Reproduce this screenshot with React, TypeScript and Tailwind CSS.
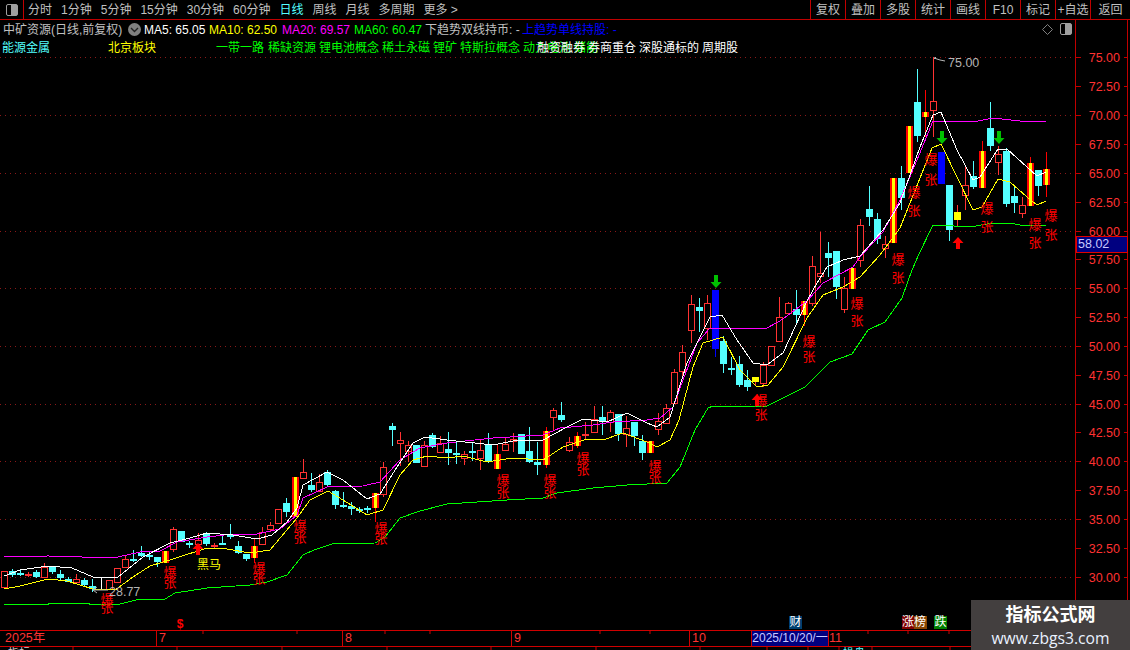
const FONT = "font-['Liberation_Sans','Noto_Sans_CJK_SC',sans-serif]"

const RED = "#ff3232"
const CYAN = "#54ffff"

// [x, type, high, bodyTop, bodyBottom, low] in page pixels
// r hollow red, c cyan, z red/yellow striped, b blue, y yellow, w white stick
type Candle = [number, string, number, number, number, number]
const candles: Candle[] = [
  [4, "r", 571, 571, 587, 587], [12, "c", 569, 571, 575, 577], [20, "c", 570, 573, 574, 576], [28, "f", 572, 574, 576, 577],
  [36, "c", 570, 572, 577, 578], [44, "r", 563, 567, 577, 577], [52, "c", 566, 567, 572, 574], [60, "c", 570, 574, 578, 580],
  [68, "c", 577, 579, 582, 582], [76, "r", 574, 579, 582, 583], [84, "c", 578, 580, 585, 587], [92, "c", 579, 586, 589, 592],
  [101, "w", 578, 578, 590, 590], [109, "r", 580, 580, 589, 589], [117, "r", 568, 568, 582, 582], [125, "r", 555, 559, 567, 567],
  [133, "c", 550, 559, 561, 562], [141, "c", 546, 553, 556, 557], [149, "c", 552, 555, 557, 560], [157, "c", 557, 557, 562, 567],
  [165, "z", 551, 551, 563, 563], [173, "r", 527, 529, 549, 552], [181, "c", 531, 531, 542, 542], [189, "c", 541, 543, 544, 548],
  [198, "r", 533, 540, 544, 546], [206, "c", 532, 533, 544, 546], [214, "f", 543, 545, 547, 548], [222, "c", 534, 543, 544, 545],
  [230, "c", 524, 534, 537, 539], [238, "c", 541, 546, 553, 554], [246, "c", 554, 554, 559, 561], [254, "z", 538, 546, 558, 563],
  [262, "r", 527, 532, 544, 544], [270, "r", 522, 525, 529, 532], [278, "r", 509, 509, 523, 523], [286, "c", 498, 503, 512, 517],
  [295, "z", 477, 477, 517, 517], [303, "r", 459, 472, 478, 479], [311, "c", 473, 485, 490, 492], [319, "r", 474, 482, 491, 491],
  [327, "c", 470, 472, 485, 487], [335, "c", 490, 491, 505, 509], [343, "c", 492, 505, 506, 508], [351, "c", 502, 506, 509, 515],
  [359, "c", 507, 509, 510, 513], [367, "c", 506, 508, 510, 513], [375, "z", 493, 493, 508, 522], [383, "r", 462, 467, 494, 497],
  [392, "c", 423, 426, 430, 446], [400, "r", 432, 440, 443, 466], [408, "r", 441, 445, 451, 462], [416, "c", 445, 445, 463, 463],
  [424, "r", 441, 445, 466, 466], [432, "c", 433, 435, 447, 448], [440, "r", 436, 443, 452, 452], [448, "c", 432, 449, 453, 465],
  [456, "c", 442, 453, 454, 464], [464, "r", 451, 454, 458, 465], [472, "c", 442, 451, 453, 461], [480, "r", 440, 450, 458, 470],
  [488, "c", 433, 445, 462, 463], [497, "z", 445, 454, 469, 469], [505, "r", 437, 444, 450, 450], [513, "r", 433, 439, 441, 452],
  [521, "c", 434, 434, 454, 454], [529, "c", 427, 451, 462, 463], [537, "c", 442, 462, 465, 475], [546, "z", 427, 431, 465, 468],
  [553, "r", 408, 410, 417, 430], [561, "c", 402, 415, 420, 422], [569, "r", 437, 442, 450, 452], [577, "z", 432, 436, 446, 448],
  [585, "f", 422, 434, 436, 440], [594, "r", 406, 419, 432, 433], [602, "c", 406, 417, 421, 435], [610, "r", 410, 412, 422, 432],
  [618, "c", 414, 414, 434, 441], [626, "r", 416, 428, 434, 447], [634, "c", 422, 422, 436, 446], [642, "c", 435, 441, 453, 460],
  [650, "z", 441, 441, 453, 453], [658, "r", 413, 421, 429, 435], [666, "r", 404, 408, 423, 424], [674, "r", 369, 372, 403, 403],
  [682, "r", 345, 352, 371, 377], [691, "r", 295, 304, 330, 343], [699, "c", 298, 307, 311, 332], [707, "r", 295, 303, 328, 340],
  [715, "b", 290, 290, 349, 357], [723, "c", 336, 341, 364, 373], [731, "c", 357, 368, 370, 375], [739, "c", 356, 364, 385, 387],
  [747, "c", 370, 380, 387, 391], [755, "y", 377, 377, 382, 386], [763, "r", 362, 365, 383, 387], [771, "r", 346, 346, 365, 365],
  [779, "r", 297, 317, 341, 342], [788, "r", 302, 303, 313, 315], [796, "c", 290, 309, 315, 325], [804, "z", 301, 301, 315, 326],
  [812, "r", 256, 266, 303, 306], [820, "r", 232, 273, 276, 283], [828, "c", 242, 253, 258, 277], [836, "c", 251, 251, 287, 299],
  [844, "r", 277, 288, 309, 313], [852, "z", 268, 268, 289, 289], [860, "r", 219, 225, 260, 267], [869, "c", 186, 209, 217, 226],
  [877, "c", 213, 219, 239, 244], [885, "r", 236, 244, 248, 258], [893, "z", 178, 178, 243, 243], [901, "c", 166, 178, 198, 210],
  [909, "z", 126, 126, 173, 173], [917, "c", 69, 102, 136, 142], [925, "z", 90, 112, 117, 137], [933, "r", 56, 101, 110, 137],
  [941, "b", 152, 152, 184, 184], [949, "c", 185, 185, 230, 241], [957, "y", 205, 212, 220, 227], [965, "r", 165, 185, 195, 210],
  [973, "c", 161, 176, 187, 189], [982, "z", 141, 151, 188, 188], [990, "c", 102, 128, 146, 151], [998, "r", 146, 154, 162, 175],
  [1006, "c", 148, 151, 204, 207], [1014, "c", 186, 196, 203, 213], [1022, "r", 197, 205, 213, 218], [1030, "z", 157, 163, 206, 206],
  [1038, "c", 170, 170, 186, 196], [1046, "z", 152, 169, 185, 197],
]

const ma60 = "4,604 48,604 48,603 89,603 89,604 120,604 140,599 165,599 175,593 207,588 250,585 267,582 287,575 303,555 314,550 332,544 375,543 385,537 400,518 420,511 447,504 507,500 543,498 557,493 593,488 627,485 667,483 680,467 695,430 708,408 713,406 767,406 805,387 830,362 852,354 868,330 885,322 902,298 912,270 919,254 933,225 938,225 970,227 993,223 1010,223 1020,225 1046,225"
const ma20 = "4,557 48,556 82,557 118,557 140,552 160,551 177,542 207,537 233,534 257,534 280,529 297,515 303,498 327,487 363,486 380,482 400,460 420,448 447,443 493,438 543,435 560,428 593,425 613,422 647,420 660,418 673,407 683,380 697,343 710,328 743,328 765,329 780,321 807,301 823,283 840,274 853,267 860,257 883,232 900,200 917,160 933,121 960,121 973,122 993,118 1020,121 1046,121"
const ma5 = "4,576 20,570 48,566 72,568 93,577 118,577 143,557 170,543 190,538 207,533 233,535 257,539 272,535 287,522 297,508 303,485 327,472 343,480 367,499 380,494 397,467 413,443 425,437 447,440 493,445 513,441 543,440 567,427 583,419 607,422 627,413 647,423 657,427 670,417 687,363 710,317 722,315 737,340 753,363 767,365 783,353 807,301 817,283 827,267 843,260 860,256 883,230 900,203 920,147 933,115 941,112 957,150 973,180 980,177 998,149 1007,149 1027,167 1037,176 1046,172"
const ma10 = "4,589 20,586 48,579 67,581 93,589 115,590 133,577 150,566 173,559 207,548 227,549 250,553 270,550 297,518 310,500 328,491 343,500 367,515 383,510 400,475 413,460 427,456 447,458 463,456 487,462 513,458 543,460 563,447 587,439 603,440 623,433 647,442 657,447 670,440 679,420 693,367 703,343 723,337 740,370 757,387 768,385 783,367 807,318 823,295 843,287 860,277 880,255 900,228 922,173 932,148 941,144 957,177 973,210 982,207 998,179 1010,182 1027,197 1037,205 1046,201"

// [x, 爆 y, 张 y]
const booms = [
  [107, 599, 607], [170, 572, 582], [259, 568, 578], [300, 526, 537], [381, 528, 538], [503, 480, 492], [550, 480, 492],
  [583, 458, 469], [655, 466, 477], [761, 400, 414], [809, 341, 356], [857, 303, 320], [898, 259, 277], [914, 192, 210],
  [931, 159, 179], [987, 208, 226], [1035, 224, 242], [1051, 215, 234],
]

const upArrows = [[198, 543], [757, 394], [958, 237]]
const downArrows = [[716, 275], [942, 131], [999, 131]]

const leftTabs = ["分时", "1分钟", "5分钟", "15分钟", "30分钟", "60分钟", "日线", "周线", "月线", "多周期", "更多 >"]
const rightTabs = ["复权", "叠加", "多股", "统计", "画线", "F10", "标记", "+自选", "返回"]
const prices = [75, 72.5, 70, 67.5, 65, 62.5, 60, 57.5, 55, 52.5, 50, 47.5, 45, 42.5, 40, 37.5, 35, 32.5, 30]
const priceY = (p: number) => Math.round(57.4 + (75 - p) * 11.54)

function CandleMark({ c }: { c: Candle }) {
  const [x, type, high, top, bottom, low] = c
  const h = Math.max(bottom - top, 2)
  if (type === "w") return <line x1={x} x2={x} y1={high} y2={low} stroke="#fff" />
  if (type === "r")
    return (
      <g>
        <line x1={x} x2={x} y1={high} y2={top} stroke={RED} />
        <line x1={x} x2={x} y1={bottom} y2={low} stroke={RED} />
        <rect x={x - 3} y={top} width={6} height={h} fill="#000" stroke={RED} />
      </g>
    )
  if (type === "z")
    return (
      <g>
        <line x1={x} x2={x} y1={high} y2={low} stroke="#f00" />
        <rect x={x - 3.5} y={top} width={7} height={h} fill="#f00" />
        <rect x={x - 1.5} y={top} width={3} height={h} fill="#ff0" />
      </g>
    )
  const fill = type === "c" ? CYAN : type === "b" ? "#00f" : type === "y" ? "#ff0" : RED
  return (
    <g>
      <line x1={x} x2={x} y1={high} y2={low} stroke={type === "y" ? RED : fill} />
      <rect x={x - 3.5} y={top} width={7} height={h} fill={fill} />
    </g>
  )
}

function Chart() {
  return (
    <svg className="block w-[1075px] h-[573px]" viewBox="0 57 1075 573">
      {[75, 70, 65, 60, 55, 50, 45, 40, 35, 30].map((p) => (
        <line key={p} x1={0} x2={1075} y1={priceY(p) + 0.5} y2={priceY(p) + 0.5} stroke="#8a1818" strokeDasharray="1 4" shapeRendering="crispEdges" />
      ))}
      <g shapeRendering="crispEdges">
        {candles.map((c) => (
          <CandleMark key={c[0]} c={c} />
        ))}
      </g>
      <g fill="none" shapeRendering="crispEdges">
        <polyline points={ma60} stroke="#00ff00" />
        <polyline points={ma20} stroke="#ff00ff" />
        <polyline points={ma5} stroke="#ffffff" />
        <polyline points={ma10} stroke="#ffff00" />
      </g>
      {upArrows.map(([x, y]) => (
        <path key={x} d={`M${x} ${y}l5.5 6h-3.5v6h-4v-6h-3.5z`} fill="#f00" />
      ))}
      {downArrows.map(([x, y]) => (
        <path key={x} d={`M${x} ${y + 13}l5.5 -6h-3.5v-7h-4v7h-3.5z`} fill="#00c000" />
      ))}
      <g fill="#f00" fontSize="13" textAnchor="middle" fontFamily="'Noto Sans CJK SC',sans-serif">
        {booms.map(([x, a, b]) => (
          <g key={x}>
            <text x={x} y={a + 5}>爆</text>
            <text x={x} y={b + 5}>张</text>
          </g>
        ))}
      </g>
      <text x={197} y={569} fill="#ff0" fontSize="12" fontFamily="'Noto Sans CJK SC',sans-serif">黑马</text>
      <text x={180} y={628} fill="#f00" fontSize="12" textAnchor="middle" fontWeight="bold" fontFamily="'Liberation Sans',sans-serif">$</text>
      <g fill="#b4b4b4" fontSize="12.5" fontFamily="'Liberation Sans',sans-serif">
        <text x={109} y={596}>28.77</text>
        <text x={948} y={67}>75.00</text>
      </g>
      <path d="M97 587l-4 3 4 3M93 590h15" fill="none" stroke="#b4b4b4" />
      <path d="M933 57h3l-2 2M934 58l3 1 3 1 5 1" fill="none" stroke="#b4b4b4" />
      <line x1={933.5} x2={933.5} y1={57} y2={101} stroke={RED} />
    </svg>
  )
}

function PriceAxis() {
  return (
    <div className="relative h-full w-[55px] border-l border-[#c00000] border-r-0">
      <svg className="block w-[55px] h-[630px]" viewBox="1076 20 55 630">
        <line x1={1127.5} x2={1127.5} y1={20} y2={650} stroke="#c00000" />
        {prices.map((p) => (
          <g key={p} stroke="#c00000">
            <line x1={1076} x2={1081} y1={priceY(p) + 0.5} y2={priceY(p) + 0.5} />
            <line x1={1124} x2={1127} y1={priceY(p) + 0.5} y2={priceY(p) + 0.5} />
          </g>
        ))}
        <g fill={RED} fontSize="12.5" textAnchor="end" fontFamily="'Liberation Sans',sans-serif">
          {prices.map((p) => (
            <text key={p} x={1120} y={priceY(p) + 4.5}>{p.toFixed(2)}</text>
          ))}
        </g>
      </svg>
      <div className="absolute left-0 top-[216px] flex h-[17px] w-[52px] items-center border border-[#e00000] bg-[#000080] pl-[1px] text-[12.5px] text-[#c8c8ff]">
        58.02
      </div>
    </div>
  )
}

function TimeAxis() {
  const months = [
    { label: "2025年", w: "w-[156px]" },
    { label: "7", w: "w-[186px]" },
    { label: "8", w: "w-[169px]" },
    { label: "9", w: "w-[178px]" },
    { label: "10", w: "w-[62px]" },
  ]
  return (
    <div className="relative h-[20px] w-[1075px] border-t border-[#d00000]">
      <div className="flex h-[15px] items-center text-[12.5px] text-[#ff3232]">
        {months.map((m, i) => (
          <div key={m.label} className={`${m.w} h-full border-[#d00000] pl-[2px] leading-[15px] ${i === 0 ? "pl-[5px]" : "border-l"}`}>
            {m.label}
          </div>
        ))}
        <div className="h-full w-[78px] whitespace-nowrap border border-y-0 border-[#d00000] bg-[#000080] text-center text-[12px] leading-[15px] text-[#c8c8ff]">
          2025/10/20/一
        </div>
        <div>11</div>
      </div>
      <svg className="absolute left-0 top-0 h-[3px] w-[1075px]" viewBox="0 0 1075 3">
        {[203, 297, 385, 430, 600, 650, 868, 908, 949, 1000].map((x) => (
          <line key={x} x1={x} x2={x} y1={0} y2={3} stroke="#d00000" />
        ))}
      </svg>
      <div className="relative h-[4px] overflow-hidden border-t border-[#d00000] text-[11px] leading-[11px]">
        <svg className="absolute left-0 top-0 h-[4px] w-[1075px]" viewBox="0 0 1075 4">
          {[73, 177, 282, 387, 491, 596, 700, 767, 808, 839, 872, 950].map((x) => (
            <line key={x} x1={x} x2={x} y1={0} y2={4} stroke="#d00000" />
          ))}
        </svg>
        <span className="absolute left-[8px] top-[1px] text-[#d0d0d0]">指标</span>
        <span className="absolute left-[843px] top-[1px] text-[#54ffff]">操盘</span>
      </div>
    </div>
  )
}

function PanelIcon({ className }: { className: string }) {
  return (
    <div className={`flex h-[12px] w-[12px] justify-end rounded-[2px] border border-[#a0a0a0] ${className}`}>
      <div className="h-full w-[6px] bg-[#a0a0a0]" />
    </div>
  )
}

export default function App() {
  return (
    <div className={`relative flex h-[650px] w-[1130px] flex-col overflow-hidden bg-black text-[12px] ${FONT}`}>
      <div className="flex h-[20px] shrink-0 items-center border-b border-[#c00000] text-[#c0c0c0]">
        <div className="flex h-full w-[24px] items-center justify-center border-r border-[#c00000]">
          <PanelIcon className="" />
        </div>
        <div className="flex flex-1 gap-[9px] pl-[4px]">
          {leftTabs.map((t) => (
            <span key={t} className={t === "日线" ? "text-[#54ffff]" : ""}>{t}</span>
          ))}
        </div>
        <div className="flex h-full">
          {rightTabs.map((t) => (
            <div key={t} className={`flex h-full items-center justify-center border-l border-[#c00000] ${t === "返回" ? "w-[40px]" : "w-[35px]"}`}>
              {t}
            </div>
          ))}
        </div>
      </div>

      <div className="flex min-h-0 flex-1">
        <div className="flex w-[1075px] flex-col">
          <div className="relative flex h-[19px] items-center pl-[3px] text-[#c0c0c0]">
            <span className="w-[125px]">中矿资源(日线,前复权)</span>
            <span className="mr-[3px] flex h-[13px] w-[13px] items-center justify-center rounded-full bg-[#808080]">
              <svg width="9" height="6" viewBox="0 0 9 6"><path d="M1 1l3.5 3.5L8 1" fill="none" stroke="#222" strokeWidth="1.4" /></svg>
            </span>
            <span className="w-[65px] text-white">MA5: 65.05</span>
            <span className="w-[73px] text-[#ffff00]">MA10: 62.50</span>
            <span className="w-[72px] text-[#ff00ff]">MA20: 69.57</span>
            <span className="w-[71px] text-[#00ff00]">MA60: 60.47</span>
            <span className="w-[97px]">下趋势双线持币: -</span>
            <span className="text-[#0000ff]">上趋势单线持股: -</span>
            <svg className="absolute left-[1042px] top-[4px]" width="11" height="11" viewBox="0 0 11 11"><path d="M5.5 .5l5 5-5 5-5-5z" fill="none" stroke="#808080" /></svg>
            <PanelIcon className="absolute left-[1060px] top-[3px]" />
          </div>
          <div className="relative flex h-[18px] items-center pl-[2px] text-[#00ff00]">
            <span className="w-[106px] text-[#54ffff]">能源金属</span>
            <span className="w-[108px] text-[#ffff00]">北京板块</span>
            <span className="flex gap-[3px]">
              <span className="mr-[1px]">一带一路</span>
              <span>稀缺资源</span>
              <span>锂电池概念</span>
              <span>稀土永磁</span>
              <span>锂矿</span>
              <span>特斯拉概念</span>
              <span>动力电池</span>
              <span>储能</span>
            </span>
            <span className="absolute left-[537px] flex gap-[3px] text-white">
              <span>融资融券</span>
              <span>券商重仓</span>
              <span>深股通标的</span>
              <span>周期股</span>
            </span>
          </div>
          <Chart />
          <TimeAxis />
        </div>
        <PriceAxis />
      </div>

      <div className="absolute bottom-0 right-0 flex h-[50px] w-[159px] flex-col items-center justify-center bg-[#433f3f]">
        <span className="text-[18px] leading-[26px] font-bold text-white">指标公式网</span>
        <span className="text-[15.7px] leading-[20px] text-[#eaf2ff] font-['Open_Sans',sans-serif]">www.zbgs3.com</span>
      </div>

      {/* event tags above the time axis */}
      <div className="absolute left-[789px] top-[616px] h-[13px] w-[13px] bg-[#003f6f] text-center text-[12px] leading-[13px] text-white">财</div>
      <div className="absolute left-[902px] top-[616px] flex h-[13px] text-[12px] leading-[13px] text-white">
        <span className="w-[12px] bg-[#800000]">涨</span>
        <span className="w-[13px] bg-[#884400]">榜</span>
      </div>
      <div className="absolute left-[934px] top-[616px] h-[13px] w-[13px] bg-[#008000] text-center text-[12px] leading-[13px] text-white">跌</div>
    </div>
  )
}
